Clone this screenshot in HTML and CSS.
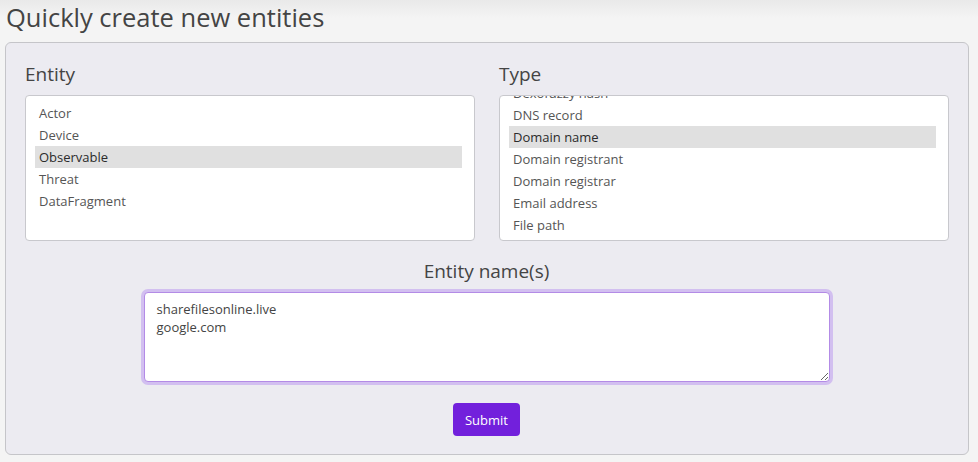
FILE: index.html
```html
<!DOCTYPE html>
<html lang="en">
<head>
<meta charset="utf-8">
<title>Quickly create new entities</title>
<link rel="stylesheet" href="styles.css">
</head>
<body>
<h1 class="title">Quickly create new entities</h1>
<form class="panel">
  <div class="columns">
    <div class="field">
      <label class="label">Entity</label>
      <div class="listbox">
        <div class="list list-entity">
          <div class="opt">Actor</div>
          <div class="opt">Device</div>
          <div class="opt selected">Observable</div>
          <div class="opt">Threat</div>
          <div class="opt">DataFragment</div>
        </div>
      </div>
    </div>
    <div class="field">
      <label class="label">Type</label>
      <div class="listbox">
        <div class="list list-type">
          <div class="opt">Dexofuzzy hash</div>
          <div class="opt">DNS record</div>
          <div class="opt selected">Domain name</div>
          <div class="opt">Domain registrant</div>
          <div class="opt">Domain registrar</div>
          <div class="opt">Email address</div>
          <div class="opt">File path</div>
          <div class="opt">Hostname</div>
        </div>
      </div>
    </div>
  </div>
  <div class="names">
    <label class="label center">Entity name(s)</label>
    <textarea class="textarea focused" spellcheck="false">sharefilesonline.live
google.com</textarea>
  </div>
  <div class="actions">
    <button type="button" class="btn">Submit</button>
  </div>
</form>
</body>
</html>
```

FILE: styles.css
```css
html, body {
  margin: 0;
  padding: 0;
}
body {
  background: linear-gradient(to bottom, #e9e9e9 0px, #f4f4f4 18px, #f4f4f4 100%);
  font-family: "Open Sans", "Noto Sans", sans-serif;
  color: #444;
  padding: 0 9px 0 5px;
  min-height: 462px;
  box-sizing: border-box;
}
.title {
  margin: -1px 0 7px 1px;
  font-size: 25.5px;
  font-weight: 400;
  line-height: 36px;
  color: #444;
}
.panel {
  display: block;
  background: #ecebf1;
  border: 1px solid #c5c5c9;
  border-radius: 6px;
  padding: 20px 20px 18px 19px;
}
.columns {
  display: grid;
  grid-template-columns: 450px 450px;
  column-gap: 24px;
}
.label {
  display: block;
  font-size: 19px;
  line-height: 22px;
  color: #444;
  margin-bottom: 10px;
}
.label.center {
  text-align: center;
}
.listbox {
  height: 144px;
  background: #fff;
  border: 1px solid #c8c8cd;
  border-radius: 4px;
  overflow: hidden;
  padding: 0 12px 0 9px;
}
.list-entity {
  margin-top: 6px;
}
.list-type {
  margin-top: -14px;
}
.opt {
  height: 22px;
  line-height: 22px;
  font-size: 13px;
  padding: 0 4px;
  color: #555;
  white-space: nowrap;
}
.opt.selected {
  background: #e0e0e0;
  color: #2b2b2b;
}
.names {
  margin-top: 19px;
  display: flex;
  flex-direction: column;
  align-items: center;
}
.textarea {
  display: block;
  width: 686px;
  height: 90px;
  box-sizing: border-box;
  border: 1px solid #b38be6;
  border-radius: 4px;
  padding: 7px 12px;
  font-family: "Open Sans", "Noto Sans", sans-serif;
  font-size: 13px;
  line-height: 18px;
  color: #444;
  background: #fff;
  resize: vertical;
  outline: none;
  margin: 0;
}
.textarea.focused {
  box-shadow: 0 0 0 3px #d2bff0;
}
.actions {
  display: flex;
  justify-content: center;
  margin-top: 21px;
}
.btn {
  height: 33px;
  width: 67px;
  padding: 0;
  border: none;
  border-radius: 4px;
  background: #7220dc;
  color: #fff;
  font-family: "Open Sans", "Noto Sans", sans-serif;
  font-size: 13px;
  cursor: pointer;
}
```
